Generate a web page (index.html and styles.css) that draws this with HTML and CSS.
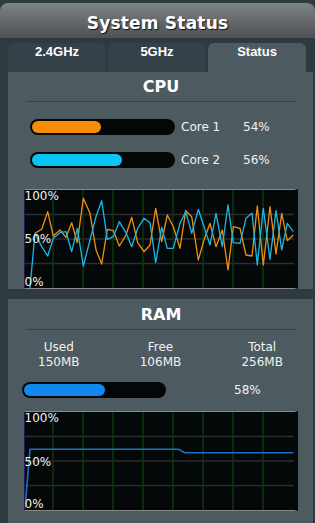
FILE: index.html
```html
<!DOCTYPE html>
<html lang="en">
<head>
    <meta charset="UTF-8">
    <meta name="viewport" content="width=device-width, initial-scale=1.0">
    <title>System Status</title>
    <link rel="stylesheet" href="styles.css">
</head>
<body>
    <div class="header">
        <h1>System Status</h1>
    </div>
    <div class="tabs">
        <div class="tab">2.4GHz</div>
        <div class="tab">5GHz</div>
        <div class="tab active">Status</div>
    </div>

    <div class="panel cpu">
        <h2>CPU</h2>
        <div class="cores">
            <div class="core-row">
                <div class="bar"><div class="fill orange" style="width: 49%"></div></div>
                <span class="core-name">Core 1</span>
                <span class="core-pct">54%</span>
            </div>
            <div class="core-row">
                <div class="bar"><div class="fill cyan" style="width: 64%"></div></div>
                <span class="core-name">Core 2</span>
                <span class="core-pct">56%</span>
            </div>
        </div>
        <div class="chart">
            <svg width="269" height="98" viewBox="1 0 269 98">
                <g class="grid-h">
                    <line x1="0" y1="24.5" x2="270" y2="24.5"/>
                    <line x1="0" y1="49" x2="270" y2="49"/>
                    <line x1="0" y1="73.5" x2="270" y2="73.5"/>
                </g>
                <g class="grid-v">
                    <line x1="29" y1="0" x2="29" y2="98"/>
                    <line x1="59" y1="0" x2="59" y2="98"/>
                    <line x1="89" y1="0" x2="89" y2="98"/>
                    <line x1="119" y1="0" x2="119" y2="98"/>
                    <line x1="149" y1="0" x2="149" y2="98"/>
                    <line x1="179" y1="0" x2="179" y2="98"/>
                    <line x1="209" y1="0" x2="209" y2="98"/>
                    <line x1="239" y1="0" x2="239" y2="98"/>
                </g>
                <polyline class="line-orange" points="11,43.3 17.7,39.3 23.7,21.7 29.3,46 36,40 42,47.3 47.7,32.7 53.3,52.7 59.3,8.3 66,23.3 72,60 77.7,74 83.3,39.3 89.3,40.7 95.3,56 102,45 107.7,27.3 113.7,52.7 120,61.7 126,55 131.7,18.3 137.7,51.7 143.3,25 149.3,36.7 156,58.3 161.7,20.7 167.7,26.7 174.3,70 180,50 186,33.3 192,56.7 198.3,40 204,80 209.3,36.7 216,38.3 222,65 228,66 233.3,16 239.3,75 246,16.7 252,64 257.7,23.3 263.3,50.7 269.3,45"/>
                <polyline class="line-cyan" points="6,98 11,43.3 17.7,56.7 23.7,66 29.3,48.3 36,42.7 42,41.7 47.7,61.7 53.3,38.3 59.3,76 66,50 72,26.7 77.7,10.7 83.3,49.3 89.3,46.7 95.3,31.7 102,42.7 107.7,56.7 113.7,38.3 120,28.3 126,32.7 131.7,72.7 137.7,37.3 143.3,58.3 149.3,58.3 156,33.3 161.7,21.7 167.7,43.3 174.3,19.3 180,36.7 186,55 192,23.3 198.3,56.7 204,15 209.3,52.7 216,53.3 222,28.3 228,23.3 233.3,75 239.3,18.3 246,69.3 252,20.7 257.7,60 263.3,33.3 269.3,41.7"/>
                <text x="0.5" y="10">100%</text>
                <text x="0.5" y="53">50%</text>
                <text x="0.5" y="95.5">0%</text>
            </svg>
        </div>
    </div>

    <div class="panel ram">
        <h2>RAM</h2>
        <div class="stats">
            <div class="stat"><div>Used</div><div>150MB</div></div>
            <div class="stat"><div>Free</div><div>106MB</div></div>
            <div class="stat"><div>Total</div><div>256MB</div></div>
        </div>
        <div class="ram-row">
            <div class="bar ram-bar"><div class="fill blue" style="width: 58%"></div></div>
            <span class="ram-pct">58%</span>
        </div>
        <div class="chart">
            <svg width="269" height="98" viewBox="1 0 269 98">
                <g class="grid-h">
                    <line x1="0" y1="24.5" x2="270" y2="24.5"/>
                    <line x1="0" y1="49" x2="270" y2="49"/>
                    <line x1="0" y1="73.5" x2="270" y2="73.5"/>
                </g>
                <g class="grid-v">
                    <line x1="29" y1="0" x2="29" y2="98"/>
                    <line x1="59" y1="0" x2="59" y2="98"/>
                    <line x1="89" y1="0" x2="89" y2="98"/>
                    <line x1="119" y1="0" x2="119" y2="98"/>
                    <line x1="149" y1="0" x2="149" y2="98"/>
                    <line x1="179" y1="0" x2="179" y2="98"/>
                    <line x1="209" y1="0" x2="209" y2="98"/>
                    <line x1="239" y1="0" x2="239" y2="98"/>
                </g>
                <polyline class="line-blue" points="1,96.3 6,37.3 154.3,37.3 161,40.7 269.3,40.7"/>
                <text x="0.5" y="10">100%</text>
                <text x="0.5" y="53.5">50%</text>
                <text x="0.5" y="95.5">0%</text>
            </svg>
        </div>
    </div>
</body>
</html>
```

FILE: styles.css
```css
body {
    margin: 0;
    background-color: #2e3a40;
    font-family: "DejaVu Sans", Verdana, sans-serif;
    color: #f2f2f2;
}
.header {
    margin-top: 3px;
    height: 35px;
    border-radius: 8px 8px 0 0;
    background: linear-gradient(#7e8386, #4e5052);
}
.header h1 {
    margin: 0;
    padding-top: 5px;
    line-height: 30px;
    font-size: 17px;
    letter-spacing: 0.2px;
    text-align: center;
    color: #fff;
    text-shadow: 1px 1px 1px #111;
}
.tabs {
    display: flex;
    gap: 2px;
    padding: 5px 0 0 8px;
}
.tab {
    width: 98px;
    height: 28px;
    padding-top: 1px;
    line-height: 28px;
    text-align: center;
    font: bold 13px "Liberation Sans", Arial, sans-serif;
    color: #fff;
    background-color: #344148;
    border-radius: 6px 6px 0 0;
}
.tab.active {
    background-color: #4d5a60;
}
.panel {
    margin: 0 2px 0 8px;
    background-color: #4d5a60;
}
.panel h2 {
    margin: 0 17px 0 18px;
    padding: 5px 0 4px;
    font-size: 16px;
    line-height: 20px;
    text-align: center;
    color: #fff;
    border-bottom: 1px solid #36444a;
}
.cores {
    display: flex;
    flex-direction: column;
    gap: 17px;
    padding: 17px 0 0 22px;
}
.core-row {
    display: flex;
    align-items: center;
    font-size: 12px;
    line-height: 15px;
}
.bar {
    width: 145px;
    height: 16px;
    box-sizing: border-box;
    padding: 2px;
    background-color: #040707;
    border-radius: 8px;
}
.fill {
    height: 12px;
    border-radius: 6px;
}
.orange {
    background-color: #f78c0a;
}
.cyan {
    background-color: #0ac4f4;
}
.blue {
    background-color: #1088f0;
}
.core-name {
    margin-left: 6px;
    width: 62px;
}
.chart {
    width: 269px;
    margin: 21px 0 10px 16px;
    background-color: #050808;
    border-top: 1px solid #8a8a8a;
    border-bottom: 1px solid #8a8a8a;
    border-left: 1px solid #201c50;
    border-right: 4px solid #05070a;
}
.chart svg {
    display: block;
}
.chart text {
    font-family: "DejaVu Sans", Verdana, sans-serif;
    font-size: 12px;
    fill: #f2f2f2;
}
.grid-h line {
    stroke: #2b2e2e;
    stroke-width: 1.5;
}
.grid-v line {
    stroke: #0e340e;
    stroke-width: 1.5;
}
polyline {
    fill: none;
    stroke-width: 1.3;
    stroke-linejoin: round;
}
.line-orange {
    stroke: #f0900f;
}
.line-cyan {
    stroke: #1ab8e8;
}
.line-blue {
    stroke: #1a72c4;
    stroke-width: 1.6;
}
.ram {
    margin-top: 5px;
    padding-bottom: 10px;
}
.ram h2 {
    padding-top: 6px;
}
.stats {
    display: grid;
    grid-template-columns: repeat(3, 1fr);
    padding-top: 10px;
    font-size: 12px;
    line-height: 15px;
    text-align: center;
}
.ram-row {
    display: flex;
    align-items: center;
    padding: 12px 0 0 14px;
    font-size: 12px;
    line-height: 15px;
}
.ram-bar {
    width: 144px;
}
.ram-pct {
    margin-left: 68px;
}
.ram .chart {
    margin-top: 13px;
}
```
